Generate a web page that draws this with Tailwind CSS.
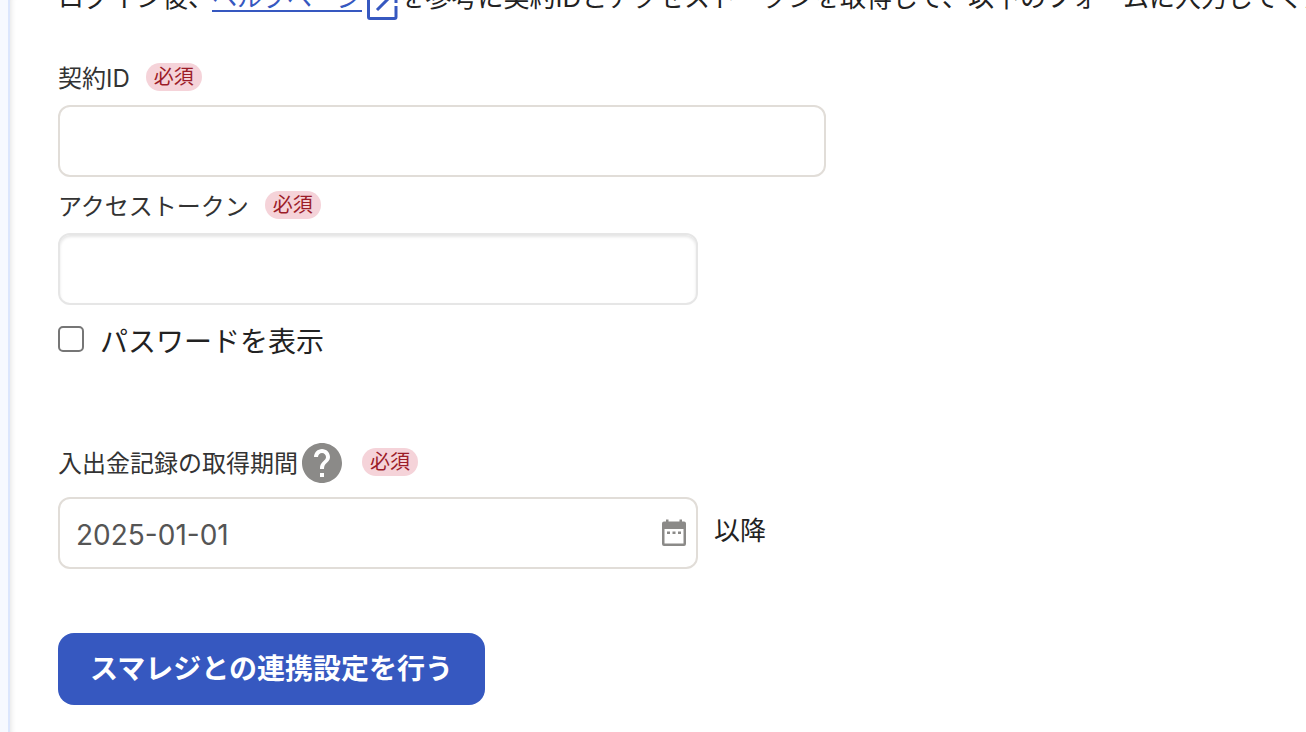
<!DOCTYPE html>
<html lang="ja">
<head>
<meta charset="utf-8">
<meta name="viewport" content="width=device-width, initial-scale=1">
<title>スマレジ連携設定</title>
<script src="https://cdn.jsdelivr.net/npm/@tailwindcss/browser@4"></script>
</head>
<body class="min-h-screen bg-[#f6f9ff] pl-2 font-['Inter','Noto_Sans_CJK_JP',sans-serif] text-[#222]">
<main class="flow-root min-h-screen overflow-hidden border-l-2 border-[#dbe6fd] bg-white pl-12 shadow-[inset_6px_0_6px_-6px_rgba(0,0,0,0.15)]">
  <p class="-mt-6 flex h-11 text-[26px] leading-[44px] whitespace-nowrap">
    <span class="-mr-0.5">ログイン後、</span>
    <a href="#" class="flex h-11 items-start gap-1 text-[#3658c0]">
      <span class="h-9 border-b-2 border-[#3658c0] text-[25px] leading-[44px]">ヘルプページ</span>
      <svg class="size-8 self-end" viewBox="0 0 32 32" fill="none" stroke="currentColor" stroke-width="3" aria-label="別タブで開く"><path d="M13 3H4.500Q2.500 3 2.500 5V29Q2.500 30.500 4 30.500H28.500Q30 30.500 30 29V18M18 3H30V15M29 4L11 22"/></svg>
    </a>
    <span class="ml-0.5">を参考に契約IDとアクセストークンを取得して、以下のフォームに入力してください。</span>
  </p>

  <form>
    <div class="mt-[39px] flex h-10 items-center gap-4">
      <label for="contract" class="text-2xl text-[#333]">契約ID</label>
      <span class="mb-1 h-7 rounded-full bg-[#f5d3d9] px-2 text-xl leading-7 text-[#9c1c28]">必須</span>
    </div>
    <input id="contract" type="text" required class="mt-1.5 block h-18 w-full max-w-[768px] rounded-xl border-2 border-[#e1ddd8] bg-white px-4 text-[28px]">

    <div class="mt-1.5 flex h-12 items-center gap-4">
      <label for="token" class="text-2xl text-[#333]">アクセストークン</label>
      <span class="mb-1 h-7 rounded-full bg-[#f5d3d9] px-2 text-xl leading-7 text-[#9c1c28]">必須</span>
    </div>
    <input id="token" type="password" required class="mt-0.5 block h-18 w-full max-w-[640px] rounded-xl border-2 border-[#e6e6e6] bg-white px-4 text-[28px] shadow-[inset_0_2px_3px_rgba(0,0,0,0.1)]">

    <div class="mt-3 flex h-12 items-center gap-4">
      <input id="show" type="checkbox" class="mb-1 size-[26px] appearance-none rounded-[5px] border-2 border-[#767676] bg-white checked:bg-[#3658c0]">
      <label for="show" class="pt-0.5 text-[28px]">パスワードを表示</label>
    </div>

    <div class="mt-[74px] flex h-12 items-center">
      <label for="since" class="pt-0.5 text-2xl text-[#333]">入出金記録の取得期間</label>
      <button type="button" aria-label="ヘルプ" class="ml-1">
        <svg class="size-10" viewBox="2 2 20 20" fill="#8b8a88"><path d="M12 2C6.480 2 2 6.480 2 12s4.480 10 10 10 10-4.480 10-10S17.520 2 12 2zm1 17h-2v-2h2v2zm2.070-7.750-.9.920C13.450 12.900 13 13.500 13 15h-2v-.5c0-1.100.450-2.100 1.170-2.830l1.240-1.260c.370-.360.590-.860.590-1.410 0-1.100-.9-2-2-2s-2 .9-2 2H8c0-2.210 1.790-4 4-4s4 1.790 4 4c0 .880-.360 1.680-.930 2.250z"/></svg>
      </button>
      <span class="mb-0.5 ml-5 h-7 rounded-full bg-[#f5d3d9] px-2 text-xl leading-7 text-[#9c1c28]">必須</span>
    </div>
    <div class="mt-[10px] flex items-center gap-4">
      <div class="flex h-18 w-full max-w-[640px] items-center rounded-xl border-2 border-[#e1ddd8] bg-white pr-[9px] pl-4">
        <input id="since" type="text" value="2025-01-01" class="min-w-0 flex-1 pt-1 text-[28px] text-[#555] outline-none">
        <button type="button" aria-label="カレンダーを開く">
          <svg class="h-7 w-[26px]" viewBox="0 0 26 28" fill="#8b8a88"><path fill-rule="evenodd" d="M5 0.500h2.500v2h11v-2H21v2h2q2 0 2 2V25q0 2-2 2H3q-2 0-2-2V4.500q0-2 2-2h2zM3.500 10v14.500h19V10z"/><path d="M6 12.500h3V15H6zm5.500 0h3V15h-3zm5.500 0h3V15h-3z"/></svg>
        </button>
      </div>
      <span class="mb-1.5 shrink-0 text-[26px]">以降</span>
    </div>

    <button type="submit" class="mt-16 block h-18 rounded-2xl bg-[#3658c0] px-8 text-[28px] font-bold text-white">スマレジとの連携設定を行う</button>
  </form>
</main>
</body>
</html>
